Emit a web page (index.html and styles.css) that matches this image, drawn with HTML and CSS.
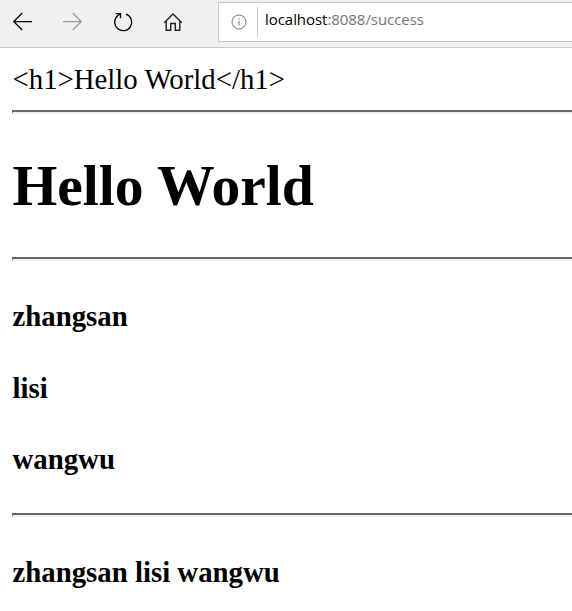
FILE: index.html
```html
<!DOCTYPE html>
<html lang="en">
<head>
<meta charset="utf-8">
<title>success</title>
<link rel="stylesheet" href="styles.css">
</head>
<body>
<header class="toolbar">
  <nav class="nav">
    <svg class="icon" viewBox="0 0 24 24"><path d="M22 11.5H4M12.2 3L3.7 11.5l8.5 8.5"/></svg>
    <svg class="icon disabled" viewBox="0 0 24 24"><path d="M3 11.5h18M12.8 3l8.500 8.500-8.500 8.500"/></svg>
    <svg class="icon" viewBox="0 0 24 24"><path d="M16 4.200A8.500 8.500 0 1 1 7.600 5.800L10.200 4M5.800 3.600H10.500V8.200"/></svg>
    <svg class="icon home" viewBox="0 0 24 24"><path d="M4.200 12.700L13 4l8.800 8.700M6.200 11V20.300H10.700V13.500H15.300V20.300H19.800V11"/></svg>
  </nav>
  <div class="address">
    <svg class="info" viewBox="0 0 16 16"><circle cx="8" cy="8" r="7"/><path d="M8 7v4.500M8 4.300v1.300"/></svg>
    <div class="url">localhost<span>:8088/success</span></div>
  </div>
</header>
<main class="page">
  <p class="raw">&lt;h1&gt;Hello World&lt;/h1&gt;</p>
  <hr>
  <h1>Hello World</h1>
  <hr>
  <section class="names">
    <h4>zhangsan</h4>
    <h4>lisi</h4>
    <h4>wangwu</h4>
  </section>
  <hr>
  <h4 class="joined">zhangsan lisi wangwu</h4>
</main>
</body>
</html>
```
FILE: styles.css
```css
* { box-sizing: border-box; }
body {
  margin: 0;
  height: 611px;
  overflow: hidden;
  background: #fff;
  color: #000;
  font-family: "Liberation Serif", "Times New Roman", serif;
}
.toolbar {
  display: flex;
  height: 48px;
  background: #f0f0f0;
  border-bottom: 1px solid #c8c8c8;
}
.nav {
  display: flex;
  gap: 26px;
  width: 218px;
  padding: 10px 0 0 10px;
}
.icon {
  width: 24px;
  height: 24px;
  fill: none;
  stroke: #000;
  stroke-width: 1.25;
}
.disabled { stroke: #999; }
.home { stroke: #222; stroke-width: 1.4; }
.address {
  display: flex;
  flex: 1;
  height: 40px;
  margin-top: 2px;
  padding: 4px 0 0 12px;
  background: #fff;
  border: 1px solid #c8c8c8;
  border-right: 0;
}
.info {
  width: 16px;
  height: 16px;
  margin-top: 7px;
  fill: none;
  stroke: #777;
  stroke-width: 1;
}
.url {
  height: 30px;
  margin-left: 10px;
  padding-left: 7px;
  border-left: 1px solid #c8c8c8;
  font: 15px/25px "Open Sans", sans-serif;
  letter-spacing: -0.05px;
  white-space: nowrap;
}
.url span { color: #757575; }
.page {
  padding: 15px 0 0 12px;
  font-size: 28.8px;
  line-height: 33px;
}
.raw { margin: 0 0 14px; text-indent: 0.5px; }
hr {
  height: 4px;
  margin: 0;
  border: 2px solid;
  border-color: #696969 #f0f0f0 #f0f0f0 #696969;
  border-left-width: 1px;
  border-right: 0;
}
h1 {
  margin: 39px 0 38px;
  font-size: 57.6px;
  line-height: 66px;
  text-indent: 0.5px;
}
h4 { margin: 0; font-size: 28.8px; text-indent: 0.5px; }
.names {
  display: flex;
  flex-direction: column;
  gap: 38.5px;
  padding: 39px 0 37px;
}
.joined { margin-top: 39px; }
```
